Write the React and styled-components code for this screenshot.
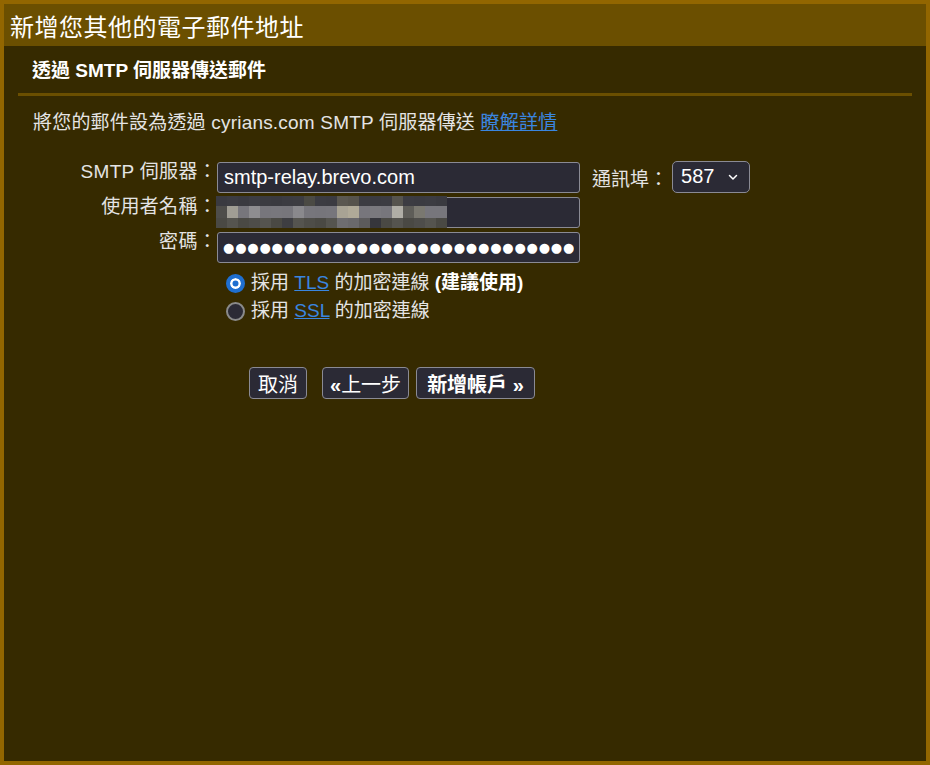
import React from 'react'
import styled, { createGlobalStyle } from 'styled-components'

const fontStack = `"Liberation Sans", "Noto Sans CJK TC", sans-serif`

const GlobalStyle = createGlobalStyle`
    html, body {
        margin: 0;
        padding: 0;
        background: #926600;
    }
    * {
        box-sizing: border-box;
    }
`

const Frame = styled.div`
    width: 930px;
    height: 765px;
    border: 4px solid #926600;
    background: #362a00;
    font-family: ${fontStack};
    color: #e4e4e4;
    display: flex;
    flex-direction: column;
`

const Header = styled.div`
    height: 42px;
    background: #6b4f00;
    display: flex;
    align-items: center;
    padding-left: 6px;
`

const Title = styled.h1`
    margin: 0;
    font-size: 24px;
    font-weight: 400;
    color: #ffffff;
    font-family: "Noto Sans CJK TC", serif;
    letter-spacing: 0.5px;
`

const Section = styled.div`
    margin: 0 14px;
`

const Subtitle = styled.h2`
    margin: 0;
    padding: 13px 14px 11px;
    font-size: 19px;
    line-height: 23px;
    font-weight: 700;
    color: #ffffff;
    border-bottom: 3px solid #6b4f00;
`

const Description = styled.p`
    margin: 16px 0 0;
    padding-left: 15px;
    font-size: 19px;
    line-height: 22px;
    letter-spacing: 0.2px;
`

const Link = styled.a`
    color: #3a86e0;
    text-decoration: underline;
`

const Form = styled.div`
    margin-top: 28px;
    display: flex;
    flex-direction: column;
    gap: 4px;
`

const Row = styled.div`
    display: flex;
    align-items: center;
`

const Label = styled.label`
    width: 199px;
    text-align: right;
    font-size: 19px;
    line-height: 22px;
    letter-spacing: 0.3px;
    align-self: flex-start;
    margin-top: -1px;
`

const FieldWrap = styled.div`
    position: relative;
`

const TextInput = styled.input`
    width: 363px;
    height: 31px;
    background: #2b2a35;
    border: 1px solid #8a8a94;
    border-radius: 3px;
    color: #ffffff;
    font-family: ${fontStack};
    font-size: 20px;
    padding: 0 6px;
    outline: none;
`

const MaskInput = styled(TextInput)`
    font-family: "DejaVu Sans", sans-serif;
    font-size: 13px;
    letter-spacing: ${p => p.$spacing}px;
    padding: 0 5px;
`

const Mosaic = styled.div`
    position: absolute;
    left: -1px;
    top: -1px;
    display: grid;
    grid-template-columns: repeat(21, 11px);
    grid-template-rows: 10px 12px 10px;
`

const Cell = styled.span`
    background: ${p => p.$c};
`

const PortLabel = styled.span`
    margin-left: 12px;
    font-size: 19px;
`

const Select = styled.div`
    margin-left: 4px;
    width: 78px;
    height: 32px;
    margin-top: -2px;
    background: #2b2a35;
    border: 1px solid #8a8a94;
    border-radius: 5px;
    display: flex;
    align-items: center;
    justify-content: space-between;
    padding: 0 10px 0 8px;
    color: #ffffff;
    font-size: 20px;
`

const Options = styled.div`
    margin-top: 9px;
    margin-left: 208px;
    display: flex;
    flex-direction: column;
    gap: 6px;
`

const Option = styled.div`
    display: flex;
    align-items: center;
    gap: 6px;
    font-size: 19px;
    line-height: 22px;
`

const Radio = styled.span`
    width: 19px;
    height: 19px;
    border-radius: 50%;
    flex: none;
    background: ${p => (p.$checked ? '#1f6fd0' : '#2b2a35')};
    border: ${p => (p.$checked ? '4px solid #1f6fd0' : '2px solid #8a8a8a')};
    box-shadow: ${p => (p.$checked ? 'inset 0 0 0 2.5px #ffffff' : 'none')};
`

const Strong = styled.b`
    font-weight: 700;
    color: #ffffff;
`

const Buttons = styled.div`
    margin-top: 45px;
    margin-left: 231px;
    display: flex;
`

const Button = styled.button`
    height: 32px;
    padding: 0 ${p => p.$pad || 8}px;
    margin-left: ${p => p.$gap || 0}px;
    background: #2b2a35;
    border: 1px solid #8a8a94;
    border-radius: 4px;
    color: #ffffff;
    font-family: ${fontStack};
    font-size: 20px;
    font-weight: ${p => (p.$bold ? 700 : 400)};
`

const Plain = styled.span`
    font-weight: 400;
`

const mosaicRows = [
    ['#3a3a40', '#3c3c42', '#3a3a40', '#3d3d43', '#3b3b41', '#3a3a40', '#3c3c42', '#3d3d42', '#4b4a44', '#3c3c42', '#3b3b41', '#5a5750', '#56534c', '#3c3c42', '#3b3b41', '#3c3c42', '#56544e', '#3c3c42', '#3b3b41', '#3c3c42', '#3a3a40'],
    ['#4e4d4a', '#a09d94', '#77767c', '#8e8d90', '#77767c', '#78777d', '#77767c', '#8a898d', '#77767c', '#76757b', '#77767c', '#a8a394', '#b0aa98', '#77767c', '#7a797e', '#77767c', '#b0aea6', '#5e5d58', '#7a7870', '#77767c', '#77767c'],
    ['#4a4944', '#55544f', '#4a4944', '#4e4d4a', '#55544f', '#4a4944', '#3e3e42', '#55544f', '#4e4d48', '#4a4944', '#55544f', '#6e6d70', '#6a696c', '#5c5b5c', '#36363c', '#4a4944', '#55544f', '#4a4944', '#4e4d4a', '#55544f', '#4a4944'],
]

const Chevron = () => (
    <svg width="12" height="12" viewBox="0 0 12 12" fill="none">
        <path d="M2.5 4.5 L6 8 L9.5 4.5" stroke="#ffffff" strokeWidth="1.5" strokeLinecap="round" strokeLinejoin="round" />
    </svg>
)

const App = () => {
    return (
        <>
            <GlobalStyle />
            <Frame>
                <Header>
                    <Title>新增您其他的電子郵件地址</Title>
                </Header>
                <Section>
                    <Subtitle>透過 SMTP 伺服器傳送郵件</Subtitle>
                    <Description>
                        將您的郵件設為透過 cyrians.com SMTP 伺服器傳送 <Link href="#">瞭解詳情</Link>
                    </Description>
                    <Form>
                        <Row>
                            <Label>SMTP 伺服器：</Label>
                            <FieldWrap>
                                <TextInput readOnly value="smtp-relay.brevo.com" />
                            </FieldWrap>
                            <PortLabel>通訊埠：</PortLabel>
                            <Select>
                                <span>587</span>
                                <Chevron />
                            </Select>
                        </Row>
                        <Row>
                            <Label>使用者名稱：</Label>
                            <FieldWrap>
                                <TextInput readOnly value="" />
                                <Mosaic>
                                    {mosaicRows.flat().map((c, i) => (
                                        <Cell key={i} $c={c} />
                                    ))}
                                </Mosaic>
                            </FieldWrap>
                        </Row>
                        <Row>
                            <Label>密碼：</Label>
                            <FieldWrap>
                                <MaskInput readOnly $spacing={0.8} value={'●'.repeat(29)} />
                            </FieldWrap>
                        </Row>
                    </Form>
                    <Options>
                        <Option>
                            <Radio $checked />
                            <span>
                                採用 <Link href="#">TLS</Link> 的加密連線 <Strong>(建議使用)</Strong>
                            </span>
                        </Option>
                        <Option>
                            <Radio />
                            <span>
                                採用 <Link href="#">SSL</Link> 的加密連線
                            </span>
                        </Option>
                    </Options>
                    <Buttons>
                        <Button $pad={8}>取消</Button>
                        <Button $gap={15} $pad={7} $bold>«<Plain>上一步</Plain></Button>
                        <Button $gap={7} $pad={10} $bold>新增帳戶 »</Button>
                    </Buttons>
                </Section>
            </Frame>
        </>
    )
}

export default App
